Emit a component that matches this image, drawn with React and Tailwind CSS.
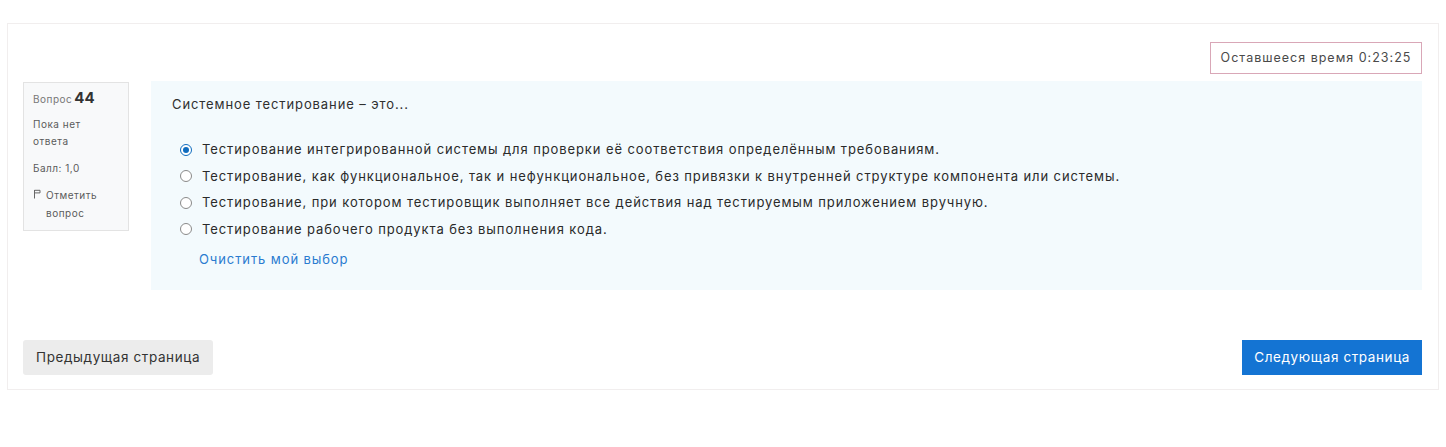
import { useState } from "react";

const options = [
  "Тестирование интегрированной системы для проверки её соответствия определённым требованиям.",
  "Тестирование, как функциональное, так и нефункциональное, без привязки к внутренней структуре компонента или системы.",
  "Тестирование, при котором тестировщик выполняет все действия над тестируемым приложением вручную.",
  "Тестирование рабочего продукта без выполнения кода.",
];

function FlagIcon() {
  return (
    <svg width="9" height="10" viewBox="0 0 9 10" className="mt-[3px] shrink-0">
      <path d="M1.5 1v8.5" stroke="#666" strokeWidth="1" fill="none" />
      <path d="M1.5 1.3h5.5v2.6h-5.5" stroke="#666" strokeWidth="1" fill="none" />
    </svg>
  );
}

export default function App() {
  const [choice, setChoice] = useState(0);

  return (
    <div
      className="w-[1446px] h-[447px] bg-white pt-[23px] px-[7px]"
      style={{ fontFamily: "Inter, 'Noto Sans', sans-serif" }}
    >
      <div className="border border-[#f1eeee] h-[367px] pt-[18px] pb-[14px] pl-[15px] pr-[16px] flex flex-col">
        {/* timer */}
        <div className="flex justify-end">
          <div className="border border-[#d9a7b7] h-[32px] w-[212px] flex items-center justify-center text-[12.5px] tracking-[1px] text-[#4a4a4a]">
            Оставшееся время 0:23:25
          </div>
        </div>

        {/* question */}
        <div className="flex items-start gap-[22px] mt-[7px]">
          <div className="w-[106px] h-[149px] mt-[1px] bg-[#f8f9fa] border border-[#e3e3e3] pl-[9px] pr-[12px] pt-[6px] text-[10px] leading-[17px] tracking-[0.5px] text-[#5b5b5b]">
            <div className="flex items-baseline gap-[2px]">
              <span className="text-[10px] text-[#777]">Вопрос</span>
              <span className="text-[15px] font-bold tracking-normal text-[#333]">44</span>
            </div>
            <div className="mt-[8px] w-[70px]">Пока нет ответа</div>
            <div className="mt-[10px]">Балл: 1,0</div>
            <div className="mt-[9px] flex gap-[4px]">
              <FlagIcon />
              <span className="w-[66px] leading-[18px]">Отметить вопрос</span>
            </div>
          </div>

          <div className="flex-1 h-[209px] bg-[#f3fafd] pl-[21px] pt-[14px] tracking-[0.9px]">
            <div className="text-[13px] text-[#2f2f2f]">Системное тестирование – это...</div>
            <div className="mt-[22px] pl-[8px] flex flex-col">
              {options.map((o, i) => (
                <label
                  key={i}
                  className="flex items-center gap-[10px] h-[26.5px] text-[13px] text-[#2a2a2a] cursor-pointer"
                >
                  <span
                    className={
                      i === choice
                        ? "w-[12px] h-[12px] rounded-full border border-[#0f6cbf] bg-white flex items-center justify-center"
                        : "w-[12px] h-[12px] rounded-full border border-[#8a8a8a] bg-white"
                    }
                    onClick={() => setChoice(i)}
                  >
                    {i === choice && <span className="w-[6px] h-[6px] rounded-full bg-[#0f6cbf]" />}
                  </span>
                  <span>{o}</span>
                </label>
              ))}
            </div>
            <div className="mt-[7px] pl-[27px] text-[13px] text-[#2a7bd0]">Очистить мой выбор</div>
          </div>
        </div>

        {/* nav */}
        <div className="mt-auto flex justify-between tracking-[0.6px]">
          <button className="h-[35px] px-[13px] bg-[#ececec] rounded-[3px] text-[13.5px] text-[#333]">
            Предыдущая страница
          </button>
          <button className="h-[35px] px-[12px] bg-[#1474d3] text-[13.5px] text-white">
            Следующая страница
          </button>
        </div>
      </div>
    </div>
  );
}
